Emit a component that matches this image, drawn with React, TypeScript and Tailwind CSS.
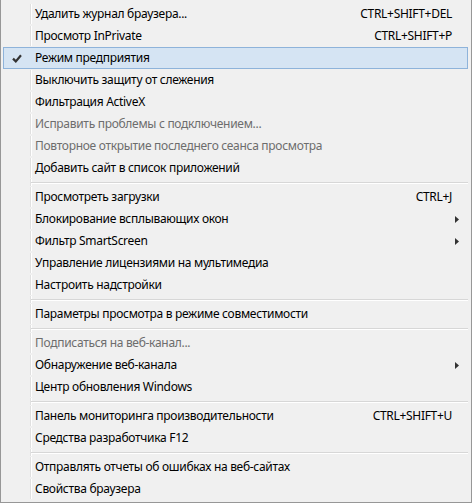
type Item =
  | { kind: "sep" }
  | {
      kind: "item";
      label: string;
      shortcut?: string;
      disabled?: boolean;
      checked?: boolean;
      submenu?: boolean;
    };

const items: Item[] = [
  { kind: "item", label: "Удалить журнал браузера...", shortcut: "CTRL+SHIFT+DEL" },
  { kind: "item", label: "Просмотр InPrivate", shortcut: "CTRL+SHIFT+P" },
  { kind: "item", label: "Режим предприятия", checked: true },
  { kind: "item", label: "Выключить защиту от слежения" },
  { kind: "item", label: "Фильтрация ActiveX" },
  { kind: "item", label: "Исправить проблемы с подключением...", disabled: true },
  { kind: "item", label: "Повторное открытие последнего сеанса просмотра", disabled: true },
  { kind: "item", label: "Добавить сайт в список приложений" },
  { kind: "sep" },
  { kind: "item", label: "Просмотреть загрузки", shortcut: "CTRL+J" },
  { kind: "item", label: "Блокирование всплывающих окон", submenu: true },
  { kind: "item", label: "Фильтр SmartScreen", submenu: true },
  { kind: "item", label: "Управление лицензиями на мультимедиа" },
  { kind: "item", label: "Настроить надстройки" },
  { kind: "sep" },
  { kind: "item", label: "Параметры просмотра в режиме совместимости" },
  { kind: "sep" },
  { kind: "item", label: "Подписаться на веб-канал...", disabled: true },
  { kind: "item", label: "Обнаружение веб-канала", submenu: true },
  { kind: "item", label: "Центр обновления Windows" },
  { kind: "sep" },
  { kind: "item", label: "Панель мониторинга производительности", shortcut: "CTRL+SHIFT+U" },
  { kind: "item", label: "Средства разработчика F12" },
  { kind: "sep" },
  { kind: "item", label: "Отправлять отчеты об ошибках на веб-сайтах" },
  { kind: "item", label: "Свойства браузера" },
];

export default function App() {
  return (
    <div
      className="w-[472px] h-[503px] bg-[#f0f0f0] border-x border-b border-[#979797] pt-[3px] px-[2px] text-[12px] tracking-[-0.3px] text-black"
      style={{ fontFamily: '"Noto Sans", "Open Sans", sans-serif' }}
    >
      {items.map((it, i) => {
        if (it.kind === "sep") {
          return (
            <div key={i} className="flex h-[7px] mr-[1px]">
              <div className="w-[27px] shrink-0" />
              <div className="flex-1 border-l border-[#e0e0e0] shadow-[inset_1px_0_0_#fff] flex flex-col pt-[3px]">
                <div className="h-px bg-[#d7d7d7]" />
                <div className="h-px bg-white" />
              </div>
            </div>
          );
        }
        if (it.checked) {
          return (
            <div key={i} className="flex h-[22px] mr-[1px] border border-[#8eb3da] bg-[#d5e4f3]">
              <div className="w-[26px] shrink-0 flex items-center justify-center">
                <svg width="10" height="9" viewBox="0 0 10 9">
                  <path d="M1 4.6 L3.8 7.4 L9 1.2" fill="none" stroke="#333" strokeWidth="2.2" />
                </svg>
              </div>
              <div className="flex-1 flex items-center border-l border-transparent pl-[4px]">
                <span className="flex-1">{it.label}</span>
              </div>
            </div>
          );
        }
        return (
          <div key={i} className="flex h-[22px] mr-[1px] border border-transparent">
            <div className="w-[26px] shrink-0" />
            <div
              className={`flex-1 flex items-center border-l border-[#e0e0e0] shadow-[inset_1px_0_0_#fff] pl-[4px] ${
                it.disabled ? "text-[#6d6d6d]" : ""
              }`}
            >
              <span className="flex-1">{it.label}</span>
              {it.shortcut && <span className="pr-[15px]">{it.shortcut}</span>}
              {it.submenu && (
                <svg width="4" height="7" viewBox="0 0 4 7" className="mr-[8px]">
                  <path d="M0 0 L4 3.5 L0 7 Z" fill="#333" />
                </svg>
              )}
            </div>
          </div>
        );
      })}
    </div>
  );
}
